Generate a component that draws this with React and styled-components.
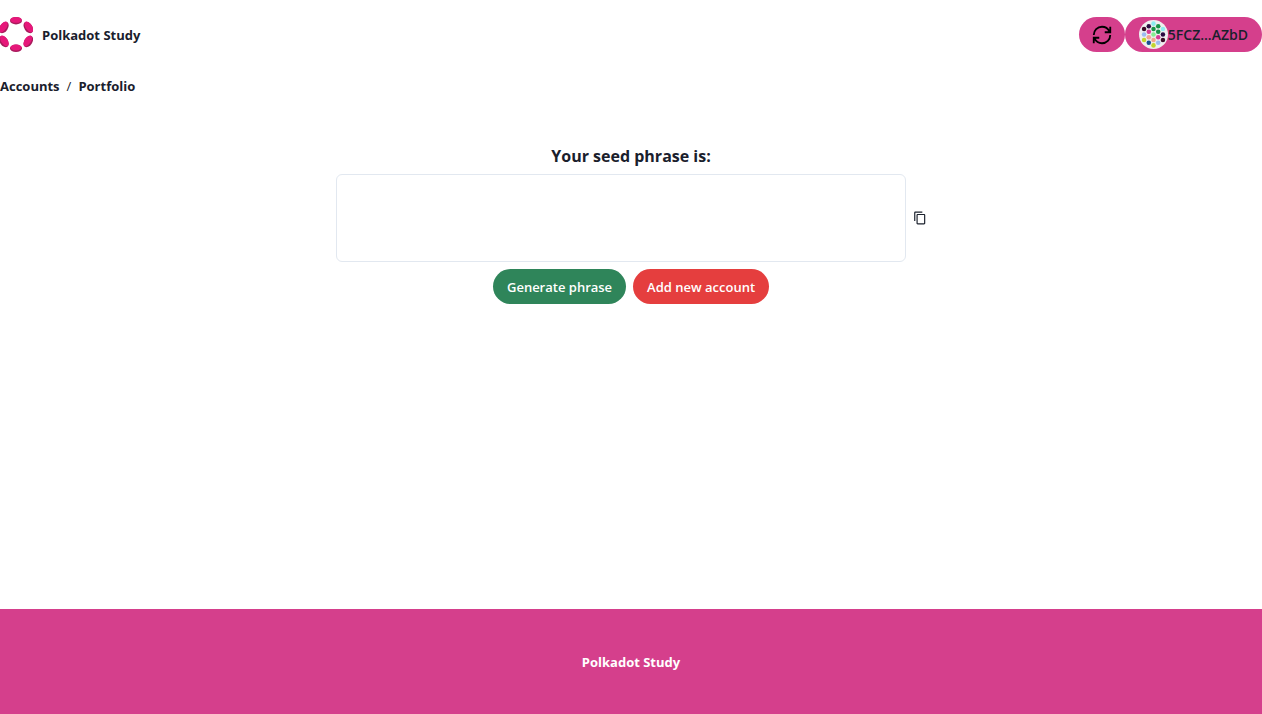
import React from "react";
import styled, { createGlobalStyle } from "styled-components";
import { MdContentCopy } from "react-icons/md";

const ink = "#1a202c";
const pink = "#d53f8c";

const GlobalStyle = createGlobalStyle`
  *, *::before, *::after { box-sizing: border-box; }
  body {
    margin: 0;
    background: #fff;
    color: ${ink};
    font-family: "Segoe UI", "Open Sans", "Noto Sans", sans-serif;
    font-size: 13px;
    line-height: 22px;
  }
  h1, h2, p, ol { margin: 0; padding: 0; }
  a { color: inherit; text-decoration: none; }
  button, textarea { font: inherit; color: inherit; }
`;

const Page = styled.div`
  display: flex;
  flex-direction: column;
  min-height: 100vh;
`;

const Header = styled.header`
  display: flex;
  align-items: center;
  justify-content: space-between;
  padding-top: 17px;
`;

const Brand = styled.a`
  display: flex;
  align-items: center;
  gap: 9px;
  font-weight: 700;
`;

const Actions = styled.div`
  display: flex;
  align-items: center;
`;

const Button = styled.button`
  display: inline-flex;
  align-items: center;
  justify-content: center;
  height: 35px;
  padding: 0 ${(p) => p.$pad || 14}px;
  border: 0;
  border-radius: 18px;
  background: ${(p) => p.$bg};
  color: ${(p) => p.$color || "#fff"};
  font-size: ${(p) => p.$size || 13}px;
  font-weight: 600;
  white-space: nowrap;
  cursor: pointer;
`;

const Breadcrumb = styled.nav`
  padding-top: 23px;
  ol {
    display: flex;
    gap: 7px;
    list-style: none;
  }
  a { font-weight: 700; }
`;

const Main = styled.main`
  flex: 1;
  display: flex;
  flex-direction: column;
  align-items: center;
  gap: 7px;
  padding-top: 48px;
`;

const Title = styled.h1`
  font-size: 16px;
  line-height: 22px;
  font-weight: 700;
`;

const PhraseRow = styled.div`
  display: flex;
  align-items: center;
  gap: 7px;
  width: 100%;
  max-width: 591px;
`;

const PhraseBox = styled.textarea`
  flex: 1;
  min-width: 0;
  height: 88px;
  padding: 14px;
  border: 1px solid #e2e8f0;
  border-radius: 6px;
  background: #fff;
  resize: none;
  outline: none;
`;

const CopyButton = styled.button`
  display: flex;
  padding: 0;
  border: 0;
  background: none;
  cursor: pointer;
`;

const ButtonRow = styled.div`
  display: flex;
  gap: 7px;
`;

const Footer = styled.footer`
  display: flex;
  align-items: center;
  justify-content: center;
  height: 105px;
  background: ${pink};
  color: #fff;
  font-weight: 700;
`;

const petals = [
  { x: 16, y: 3.7, angle: 0, rx: 6, ry: 3.7 },
  { x: 28.3, y: 10.5, angle: 57, rx: 6.4, ry: 4 },
  { x: 28.3, y: 24.5, angle: -57, rx: 6.4, ry: 4 },
  { x: 16, y: 31.3, angle: 0, rx: 6, ry: 3.7 },
  { x: 3.9, y: 24.5, angle: 57, rx: 6.4, ry: 4 },
  { x: 3.9, y: 10.5, angle: -57, rx: 6.4, ry: 4 },
];

function Logo() {
  return (
    <svg width="33" height="35" viewBox="0 0 33 35" aria-hidden="true">
      {petals.map(({ x, y, angle, rx, ry }) => (
        <g key={`${x}-${y}`} transform={`translate(${x} ${y}) rotate(${angle})`}>
          <ellipse rx={rx} ry={ry} fill="#a81b5c" />
          <ellipse
            cx={angle ? -0.3 * Math.sign(angle) : 0}
            cy="-0.8"
            rx={rx - 0.3}
            ry={ry - 0.8}
            fill="#e6187a"
          />
        </g>
      ))}
    </svg>
  );
}

function RefreshIcon() {
  return (
    <svg width="22" height="22" viewBox="0 0 24 24" fill="none" stroke="#000" strokeWidth="2" aria-hidden="true">
      <path d="M20 8C18.6 5 15.5 3 12 3 7 3 3 7 3 12M4 16C5.4 19 8.5 21 12 21 17 21 21 17 21 12M9 15H3V21M15 9H21V3" />
    </svg>
  );
}

const dots = [
  [32, 8, "#8cecf0"],
  [32, 20, "#169548"],
  [21.6, 14, "#2b0940"],
  [11.2, 20, "#3d0a28"],
  [21.6, 26, "#d83b97"],
  [11.2, 32, "#9cbcf0"],
  [11.2, 44, "#c2d52c"],
  [21.6, 38, "#f2a591"],
  [21.6, 50, "#194f92"],
  [32, 56, "#c2d52c"],
  [32, 44, "#f2a591"],
  [42.4, 50, "#9cbcf0"],
  [52.8, 44, "#3d0a28"],
  [42.4, 38, "#d83b97"],
  [52.8, 32, "#2b0940"],
  [52.8, 20, "#8cecf0"],
  [42.4, 26, "#169548"],
  [42.4, 14, "#169548"],
  [32, 32, "#86ee92"],
];

function Identicon() {
  return (
    <svg width="29" height="29" viewBox="0 0 64 64" aria-hidden="true">
      <circle cx="32" cy="32" r="32" fill="#eee" />
      {dots.map(([x, y, fill]) => (
        <circle key={`${x}-${y}`} cx={x} cy={y} r="5" fill={fill} />
      ))}
    </svg>
  );
}

export default function App() {
  return (
    <Page>
      <GlobalStyle />
      <Header>
        <Brand href="#">
          <Logo />
          Polkadot Study
        </Brand>
        <Actions>
          <Button $bg={pink} $pad={12} aria-label="Refresh">
            <RefreshIcon />
          </Button>
          <Button $bg={pink} $color={ink} $size={14}>
            <Identicon />
            5FCZ...AZbD
          </Button>
        </Actions>
      </Header>
      <Breadcrumb aria-label="Breadcrumb">
        <ol>
          <li><a href="#accounts">Accounts</a></li>
          <li aria-hidden="true">/</li>
          <li><a href="#portfolio">Portfolio</a></li>
        </ol>
      </Breadcrumb>
      <Main>
        <Title><label htmlFor="phrase">Your seed phrase is:</label></Title>
        <PhraseRow>
          <PhraseBox id="phrase" readOnly />
          <CopyButton aria-label="Copy phrase"><MdContentCopy size={14} /></CopyButton>
        </PhraseRow>
        <ButtonRow>
          <Button $bg="#2f855a">Generate phrase</Button>
          <Button $bg="#e53e3e">Add new account</Button>
        </ButtonRow>
      </Main>
      <Footer>Polkadot Study</Footer>
    </Page>
  );
}
